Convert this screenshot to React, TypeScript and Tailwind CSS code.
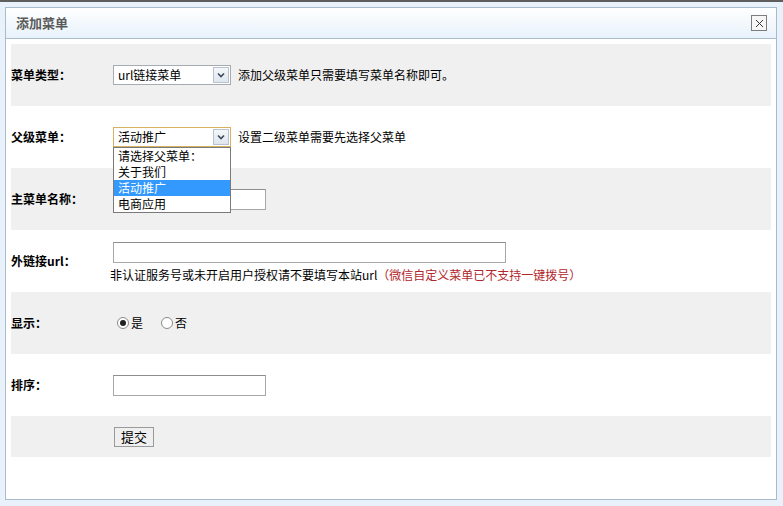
import { X } from "lucide-react";

const font = { fontFamily: '"Noto Sans CJK SC", "Liberation Sans", sans-serif' };

interface RowProps {
  label?: string;
  gray?: boolean;
  short?: boolean;
  children?: React.ReactNode;
}

const Row = ({ label, gray, short, children }: RowProps) => (
  <div className={`flex items-center ${short ? "h-[41px]" : "h-[62px]"} ${gray ? "bg-[#f0f0f0]" : "bg-white"}`}>
    <div className="w-[102px] shrink-0 text-[12px] font-bold text-black">{label}</div>
    <div className="flex-1 flex items-center">{children}</div>
  </div>
);

const FakeSelect = ({ value, focused }: { value: string; focused?: boolean }) => (
  <div
    className={`relative flex items-center w-[118px] h-[20px] bg-white border ${
      focused ? "border-[#d6b25e]" : "border-[#a5acb2]"
    }`}
  >
    <span className="pl-[4px] text-[12px] leading-none text-black">{value}</span>
    <div className="absolute right-[1px] top-[1px] w-[16px] h-[16px] border border-[#b8c3cf] bg-gradient-to-b from-[#f4f7fa] to-[#dfe6ee] flex items-center justify-center">
      <svg width="8" height="6" viewBox="0 0 8 6">
        <path d="M1 1.5 L4 4.5 L7 1.5" fill="none" stroke="#3a4a5c" strokeWidth="1.6" />
      </svg>
    </div>
  </div>
);

const Input = ({ w }: { w: string }) => (
  <div className={`${w} h-[21px] bg-white border border-[#a8a8a8] border-t-[#8e8e8e]`} />
);

const Radio = ({ checked }: { checked?: boolean }) => (
  <span className="w-[12px] h-[12px] rounded-full border border-[#8a8a8a] bg-white flex items-center justify-center">
    {checked && <span className="w-[6px] h-[6px] rounded-full bg-[#222]" />}
  </span>
);

export default function App() {
  return (
    <div className="w-[783px] h-[506px] bg-[#e9f2fa] overflow-hidden text-black" style={font}>
      <div className="h-[2px] bg-[#5e5e5e]" />
      <div className="ml-[5px] mt-[5px] w-[772px] h-[493px] border border-[#a9bccd] bg-white flex flex-col">
        {/* title bar */}
        <div className="h-[31px] shrink-0 flex items-center justify-between px-[10px] bg-gradient-to-b from-white to-[#e8f2fb] border-b border-[#a9bccd]">
          <span className="text-[13px] font-bold text-[#5a5a5a]">添加菜单</span>
          <div className="w-[16px] h-[16px] mr-[-1px] border border-[#7d7d7d] bg-[#f6f6f6] flex items-center justify-center">
            <X className="w-[13px] h-[13px] text-[#333]" strokeWidth={1.8} />
          </div>
        </div>

        <div className="pt-[5px] px-[5px]">
          <Row label="菜单类型：" gray>
            <FakeSelect value="url链接菜单" />
            <span className="ml-[7px] text-[12px]">添加父级菜单只需要填写菜单名称即可。</span>
          </Row>

          <Row label="父级菜单：">
            <div className="relative">
              <FakeSelect value="活动推广" focused />
              <div className="absolute left-0 top-[20px] z-10 w-[118px] bg-white border border-[#7a7a7a] text-[12px] leading-[16px]">
                <div className="pl-[4px]">请选择父菜单：</div>
                <div className="pl-[4px]">关于我们</div>
                <div className="pl-[4px] bg-[#3399ff] text-white">活动推广</div>
                <div className="pl-[4px]">电商应用</div>
              </div>
            </div>
            <span className="ml-[7px] text-[12px]">设置二级菜单需要先选择父菜单</span>
          </Row>

          <Row label="主菜单名称：" gray>
            <Input w="w-[153px]" />
          </Row>

          <Row label="外链接url：">
            <div className="flex flex-col pt-[2px]">
              <Input w="w-[393px]" />
              <div className="mt-[4px] ml-[-3px] text-[12px] leading-[16px]">
                非认证服务号或未开启用户授权请不要填写本站url
                <span className="text-[#b3262b]">（微信自定义菜单已不支持一键拨号）</span>
              </div>
            </div>
          </Row>

          <Row label="显示：" gray>
            <label className="ml-[4px] flex items-center gap-[2px] text-[12px]">
              <Radio checked />是
            </label>
            <label className="ml-[18px] flex items-center gap-[2px] text-[12px]">
              <Radio />否
            </label>
          </Row>

          <Row label="排序：">
            <Input w="w-[153px]" />
          </Row>

          <Row gray short>
            <button className="ml-[1px] w-[40px] h-[20px] border border-[#9a9a9a] bg-[#efefef] text-[13px] leading-none text-black">
              提交
            </button>
          </Row>
        </div>
      </div>
    </div>
  );
}
